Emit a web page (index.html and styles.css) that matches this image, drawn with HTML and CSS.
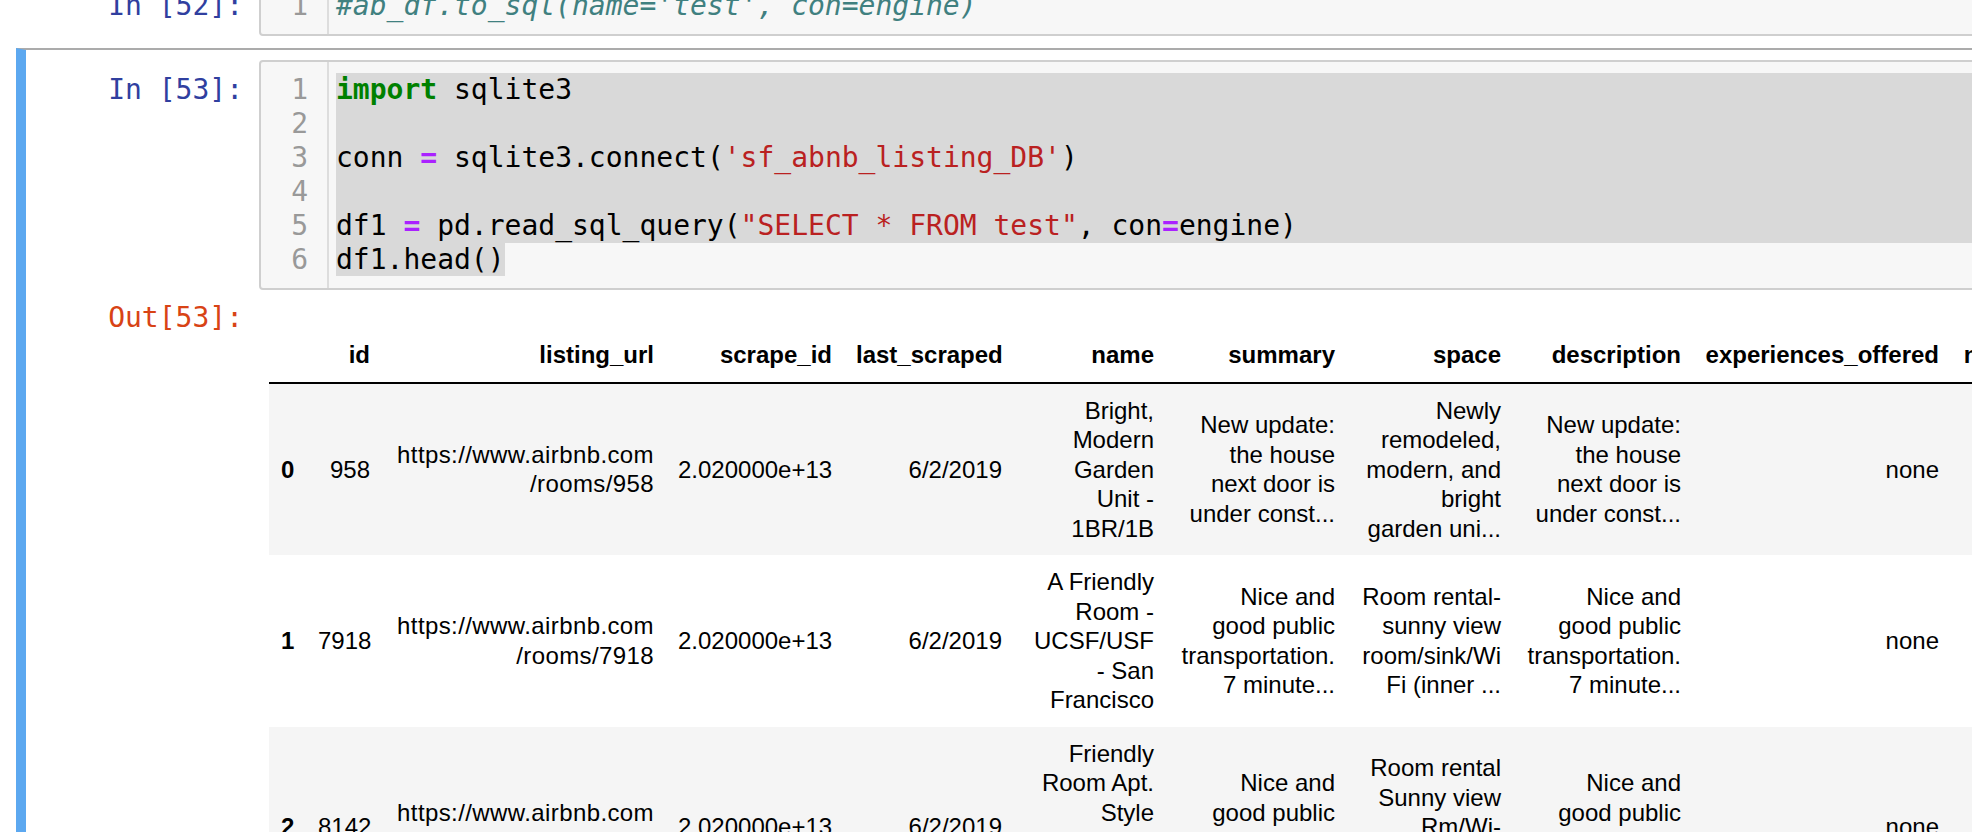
FILE: index.html
```html
<!DOCTYPE html>
<html lang="en">
<head>
<meta charset="utf-8">
<title>Notebook</title>
<link rel="stylesheet" href="styles.css">
</head>
<body>
<div class="notebook">
  <div class="cell">
    <div class="input">
      <div class="prompt in-prompt">In&nbsp;[52]:</div>
      <div class="editor">
        <div class="gutter"><div class="ln">1</div></div>
        <div class="code">
          <div class="line"><span class="cm">#ab_df.to_sql(name='test', con=engine)</span></div>
        </div>
      </div>
    </div>
  </div>

  <div class="cell selected">
    <div class="input">
      <div class="prompt in-prompt">In&nbsp;[53]:</div>
      <div class="editor">
        <div class="gutter">
          <div class="ln">1</div><div class="ln">2</div><div class="ln">3</div><div class="ln">4</div><div class="ln">5</div><div class="ln">6</div>
        </div>
        <div class="code">
          <div class="line sel"><span class="kw">import</span> sqlite3</div>
          <div class="line sel"> </div>
          <div class="line sel">conn <span class="op">=</span> sqlite3.connect(<span class="st">'sf_abnb_listing_DB'</span>)</div>
          <div class="line sel"> </div>
          <div class="line sel">df1 <span class="op">=</span> pd.read_sql_query(<span class="st">"SELECT * FROM test"</span>, con<span class="op">=</span>engine)</div>
          <div class="line"><span class="sel">df1.head()</span></div>
        </div>
      </div>
    </div>

    <div class="output">
      <div class="prompt out-prompt">Out[53]:</div>
      <div class="subarea">
        <table class="df">
          <colgroup>
            <col class="c-idx"><col class="c-id"><col class="c-url"><col class="c-scrape"><col class="c-last">
            <col class="c-name"><col class="c-summary"><col class="c-space"><col class="c-desc"><col class="c-exp"><col class="c-nb">
          </colgroup>
          <thead>
            <tr>
              <th></th><th>id</th><th>listing_url</th><th>scrape_id</th><th>last_scraped</th><th>name</th><th>summary</th><th>space</th><th>description</th><th>experiences_offered</th><th>neighborhood_overview</th>
            </tr>
          </thead>
          <tbody>
            <tr>
              <th>0</th>
              <td>958</td>
              <td class="url">https://www.airbnb.com<br>/rooms/958</td>
              <td>2.020000e+13</td>
              <td>6/2/2019</td>
              <td>Bright,<br>Modern<br>Garden<br>Unit -<br>1BR/1B</td>
              <td>New update:<br>the house<br>next door is<br>under const...</td>
              <td>Newly<br>remodeled,<br>modern, and<br>bright<br>garden uni...</td>
              <td>New update:<br>the house<br>next door is<br>under const...</td>
              <td>none</td>
              <td>Our bright<br>garden unit<br>overlooks a...</td>
            </tr>
            <tr>
              <th>1</th>
              <td>7918</td>
              <td class="url">https://www.airbnb.com<br>/rooms/7918</td>
              <td>2.020000e+13</td>
              <td>6/2/2019</td>
              <td>A Friendly<br>Room -<br>UCSF/USF<br>- San<br>Francisco</td>
              <td>Nice and<br>good public<br>transportation.<br>7 minute...</td>
              <td>Room rental-<br>sunny view<br>room/sink/Wi<br>Fi (inner ...</td>
              <td>Nice and<br>good public<br>transportation.<br>7 minute...</td>
              <td>none</td>
              <td>Shopping<br>old town,<br>restaurants...</td>
            </tr>
            <tr>
              <th>2</th>
              <td>8142</td>
              <td class="url">https://www.airbnb.com<br>/rooms/8142</td>
              <td>2.020000e+13</td>
              <td>6/2/2019</td>
              <td>Friendly<br>Room Apt.<br>Style<br>-UCSF/USF<br>- San<br>Francisco</td>
              <td>Nice and<br>good public<br>transportation.<br>7 minute...</td>
              <td>Room rental<br>Sunny view<br>Rm/Wi-<br>Fi/TV (inner<br>...</td>
              <td>Nice and<br>good public<br>transportation.<br>7 minute...</td>
              <td>none</td>
              <td>Shopping<br>old town,<br>restaurants...</td>
            </tr>
          </tbody>
        </table>
      </div>
    </div>
  </div>
</div>
</body>
</html>
```
FILE: styles.css
```css
html, body {
  margin: 0;
  padding: 0;
  background: #ffffff;
}
body {
  width: 1972px;
  height: 832px;
  overflow: hidden;
}
.notebook {
  margin-top: -36px;
  padding-left: 16px;
  width: 2400px;
}
.cell {
  border: 2px solid transparent;
  border-left: 10px solid transparent;
  padding: 10px 10px;
}
.cell.selected {
  border-color: #ababab;
  border-left-color: #5ca8f0;
}
.input,
.output {
  display: flex;
  align-items: flex-start;
}
.prompt {
  flex: none;
  width: 223px;
  box-sizing: border-box;
  padding-right: 16px;
  text-align: right;
  font-family: "DejaVu Sans Mono", monospace;
  font-size: 28px;
  line-height: 34px;
  white-space: nowrap;
}
.in-prompt {
  color: #303f9f;
  padding-top: 13px;
}
.out-prompt {
  color: #d84315;
  padding-top: 11px;
}
.editor {
  flex: 1;
  display: flex;
  border: 2px solid #cfcfcf;
  border-radius: 4px;
  background: #f7f7f7;
  font-family: "DejaVu Sans Mono", monospace;
  font-size: 28px;
  line-height: 34px;
  color: #000;
}
.gutter {
  flex: none;
  width: 68px;
  box-sizing: border-box;
  border-right: 2px solid #dddddd;
  padding: 11px 19px 11px 0;
  text-align: right;
  color: #999999;
}
.ln {
  height: 34px;
}
.code {
  flex: 1;
  padding: 11px 0 11px 7px;
}
.line {
  height: 34px;
  white-space: pre;
}
.sel {
  background: #d9d9d9;
}
.kw {
  color: #008000;
  font-weight: bold;
}
.op {
  color: #aa22ff;
  font-weight: bold;
}
.st {
  color: #ba2121;
}
.cm {
  color: #408080;
  font-style: italic;
}
.subarea {
  flex: 1;
  padding: 11px 10px;
}
.df {
  margin-top: 27px;
  border-collapse: collapse;
  border-spacing: 0;
  table-layout: fixed;
  width: 1984px;
  font-family: "Liberation Sans", Arial, sans-serif;
  font-size: 24px;
  line-height: 29.5px;
  color: #000;
}
.df th,
.df td {
  padding: 12px;
  text-align: right;
  vertical-align: middle;
  white-space: nowrap;
  font-weight: normal;
}
.df th {
  font-weight: bold;
}
.df thead th {
  border-bottom: 2px solid #000;
}
.df tbody tr:nth-child(odd) {
  background: #f5f5f5;
}
.df .url {
  letter-spacing: 0.4px;
}
.c-idx { width: 37px; }
.c-id { width: 76px; }
.c-url { width: 284px; }
.c-scrape { width: 178px; }
.c-last { width: 170px; }
.c-name { width: 152px; }
.c-summary { width: 181px; }
.c-space { width: 166px; }
.c-desc { width: 180px; }
.c-exp { width: 258px; }
.c-nb { width: 302px; }
```
